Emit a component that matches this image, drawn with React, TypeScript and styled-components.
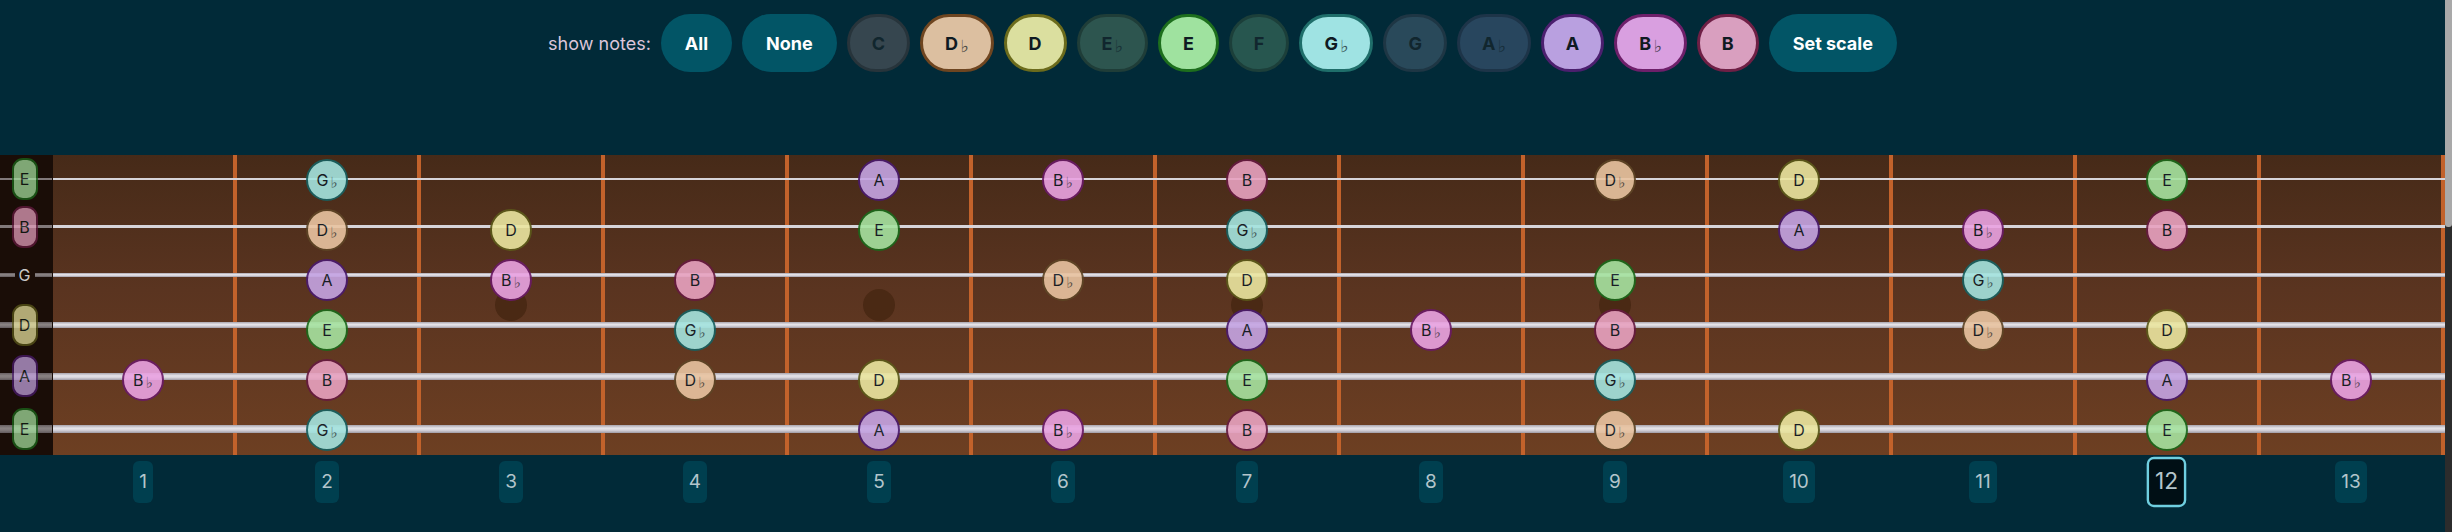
import React from 'react';
import styled, { createGlobalStyle, css } from 'styled-components';

const GlobalStyle = createGlobalStyle`
  html, body { margin: 0; padding: 0; background: #012a38; overflow: hidden; }
  body { font-family: Inter, "Noto Sans", "DejaVu Sans", sans-serif; }
  * { box-sizing: border-box; }
`;

type Palette = {
  fill: string;
  border: string;
  board: string;
  boardBorder: string;
  dim: string;
  dimBorder: string;
};

const NOTES = ['C', 'D♭', 'D', 'E♭', 'E', 'F', 'G♭', 'G', 'A♭', 'A', 'B♭', 'B'];

const PALETTE: Record<string, Palette> = {
  C: { fill: '#d0d0d0', border: '#555', board: '#d8d8d8', boardBorder: '#555', dim: '#36464f', dimBorder: '#27343b' },
  'D♭': { fill: '#dcbfa0', border: '#6e4520', board: '#e9c4a1', boardBorder: '#5e4526', dim: '#4a3a30', dimBorder: '#3a2c22' },
  D: { fill: '#dbdf9f', border: '#6b6b1c', board: '#ebe6a0', boardBorder: '#5c5a1a', dim: '#4a4c34', dimBorder: '#3a3c26' },
  'E♭': { fill: '#8fcfbf', border: '#1f5a50', board: '#8fcfbf', boardBorder: '#1f5a50', dim: '#2d554f', dimBorder: '#1f3d38' },
  E: { fill: '#9fe29f', border: '#1d6e1d', board: '#a6e3a0', boardBorder: '#1b6a1b', dim: '#2f5a3c', dimBorder: '#1f4028' },
  F: { fill: '#8fd7c4', border: '#1c5a50', board: '#8fd7c4', boardBorder: '#1c5a50', dim: '#27564f', dimBorder: '#1c3f3a' },
  'G♭': { fill: '#9fe3e3', border: '#1f6e6a', board: '#a4e4df', boardBorder: '#176161', dim: '#2c5a5e', dimBorder: '#1e4044' },
  G: { fill: '#9fc8e0', border: '#1e4a66', board: '#9fc8e0', boardBorder: '#1e4a66', dim: '#29495a', dimBorder: '#1e3644' },
  'A♭': { fill: '#9fb4e4', border: '#1e3a70', board: '#9fb4e4', boardBorder: '#1e3a70', dim: '#28465e', dimBorder: '#1d3448' },
  A: { fill: '#b9a0e0', border: '#4b1f6e', board: '#c5a4e3', boardBorder: '#4a1a6e', dim: '#3c3658', dimBorder: '#2c2642' },
  'B♭': { fill: '#d99fe0', border: '#6e1f6a', board: '#eaa3e2', boardBorder: '#6a1a66', dim: '#48345a', dimBorder: '#362644' },
  B: { fill: '#d99fbf', border: '#6e1f45', board: '#e8a2c0', boardBorder: '#661a40', dim: '#48344a', dimBorder: '#362636' },
};

const SELECTED = new Set(['D♭', 'D', 'E', 'G♭', 'A', 'B♭', 'B']);

type GuitarString = { open: number; center: number; thick: number };

// open note index, string center within its 50px row, string thickness
const STRINGS: GuitarString[] = [
  { open: 4, center: 24, thick: 2 },
  { open: 11, center: 21.7, thick: 3 },
  { open: 7, center: 20.2, thick: 4 },
  { open: 2, center: 19.8, thick: 6 },
  { open: 9, center: 21.3, thick: 7 },
  { open: 4, center: 23.8, thick: 8 },
];

const FRETS = Array.from({ length: 13 }, (_, i) => i + 1);
const INLAYS = new Set([3, 5, 7, 9]);
const ACTIVE_FRET = 12;
const NUT_W = 53;

const stringBg = (thick: number) =>
  thick <= 3
    ? '#d7d4d9'
    : 'linear-gradient(to bottom, #a8a4ad 0%, #e6e4e9 40%, #d6d3da 65%, #9f9ba5 100%)';

/* ---------- page frame ---------- */

const Page = styled.div`
  display: flex;
  width: 100vw;
  height: 100vh;
  overflow: hidden;
`;

const Main = styled.main`
  flex: 1;
  min-width: 0;
  display: flex;
  flex-direction: column;
`;

const ScrollRail = styled.div`
  width: 7px;
  flex: none;
  background: #2c2c2c;
`;

const ScrollThumb = styled.div`
  height: 227px;
  background: #a9a9a9;
  border-radius: 0 0 3px 3px;
`;

/* ---------- toolbar ---------- */

const Toolbar = styled.div`
  display: flex;
  align-items: center;
  justify-content: center;
  gap: 10px;
  padding-top: 14px;
  height: 72px;
  margin-bottom: 83px;
`;

const ToolbarLabel = styled.span`
  color: #dcc5da;
  font-size: 18px;
`;

const pillBase = css`
  height: 58px;
  border-radius: 29px;
  font-family: Inter, "Noto Sans", "DejaVu Sans", sans-serif;
  font-size: 18px;
  font-weight: 700;
  display: inline-flex;
  align-items: center;
  justify-content: center;
  cursor: pointer;
`;

const ActionButton = styled.button`
  ${pillBase};
  padding: 0 24px;
  border: none;
  background: #025566;
  color: #ffffff;
`;

const NoteToggle = styled.button<{ $p: Palette; $on: boolean }>`
  ${pillBase};
  padding: 0 22px;
  border: 3px solid ${(p) => (p.$on ? p.$p.border : p.$p.dimBorder)};
  background: ${(p) => (p.$on ? p.$p.fill : p.$p.dim)};
  color: ${(p) => (p.$on ? '#0f1a22' : '#11262e')};
`;

const Flat = styled.span`
  font-family: "DejaVu Sans", sans-serif;
  font-size: 0.95em;
  font-weight: 400;
  margin-left: 0.14em;
  position: relative;
  top: 0.2em;
  opacity: 0.72;
`;

const NoteText = ({ name }: { name: string }) => (
  <>
    {name[0]}
    {name.length > 1 && <Flat>♭</Flat>}
  </>
);

/* ---------- fretboard ---------- */

const Board = styled.div`
  display: flex;
  flex-direction: column;
  background: linear-gradient(to bottom, #462a18 0%, #5a3420 45%, #6d3f22 100%);
`;

const StringRow = styled.div<{ $center: number; $thick: number }>`
  position: relative;
  display: grid;
  grid-template-columns: ${NUT_W}px repeat(13, 1fr);
  height: 50px;
  &::after {
    content: '';
    position: absolute;
    left: ${NUT_W}px;
    right: 0;
    top: ${(p) => p.$center - p.$thick / 2}px;
    height: ${(p) => p.$thick}px;
    background: ${(p) => stringBg(p.$thick)};
    z-index: 1;
    pointer-events: none;
  }
`;

const NutCell = styled.div<{ $center: number; $thick: number }>`
  position: relative;
  background: #1a0d07;
  display: flex;
  justify-content: center;
  padding-right: 4px;
  &::before {
    content: '';
    position: absolute;
    left: 0;
    right: 1px;
    top: ${(p) => p.$center - p.$thick / 2}px;
    height: ${(p) => p.$thick}px;
    background: ${(p) => stringBg(p.$thick)};
    opacity: 0.55;
  }
`;

const OpenLabel = styled.div<{ $p: Palette; $on: boolean; $center: number }>`
  position: relative;
  z-index: 1;
  align-self: flex-start;
  margin-top: ${(p) => p.$center - 21}px;
  height: 42px;
  display: flex;
  align-items: center;
  justify-content: center;
  font-size: 16px;
  ${(p) =>
    p.$on
      ? css`
          width: 26px;
          border-radius: 11px;
          border: 2.5px solid ${p.$p.boardBorder};
          background: ${p.$p.board};
          color: #0e1a14;
          opacity: 0.72;
        `
      : css`
          width: 20px;
          color: #c9c6c6;
          background: linear-gradient(to bottom, transparent 35%, #1a0d07 35%, #1a0d07 65%, transparent 65%);
        `}
`;

const FretCell = styled.div`
  position: relative;
  border-right: 4px solid #c2622b;
  display: flex;
  align-items: center;
  justify-content: center;
`;

const NoteDot = styled.div<{ $p: Palette }>`
  position: relative;
  z-index: 2;
  width: 42px;
  height: 42px;
  border-radius: 50%;
  border: 2.5px solid ${(p) => p.$p.boardBorder};
  background: ${(p) => p.$p.board};
  opacity: 0.9;
  color: #111a24;
  font-size: 16px;
  display: flex;
  align-items: center;
  justify-content: center;
`;

const Inlay = styled.div`
  position: absolute;
  left: 50%;
  bottom: -16px;
  width: 32px;
  height: 32px;
  margin-left: -16px;
  border-radius: 50%;
  background: #4a2914;
`;

/* ---------- fret numbers ---------- */

const FretNumbers = styled.div`
  display: grid;
  grid-template-columns: ${NUT_W}px repeat(13, 1fr);
  margin-top: 6px;
`;

const FretNumCell = styled.div`
  display: flex;
  justify-content: center;
  padding-right: 4px;
`;

const FretTag = styled.div<{ $active: boolean }>`
  height: 42px;
  line-height: 42px;
  border-radius: 6px;
  font-size: 19px;
  color: #b3c5cb;
  ${(p) =>
    p.$active
      ? css`
          padding: 0 5px;
          line-height: 38px;
          background: #000f15;
          border: 2px solid #6fcfe0;
          transform: scale(1.2);
        `
      : css`
          padding: 0 6px;
          background: #003f4f;
        `}
`;

export default function App() {
  return (
    <Page>
      <GlobalStyle />
      <Main>
        <Toolbar>
          <ToolbarLabel>show notes:</ToolbarLabel>
          <ActionButton>All</ActionButton>
          <ActionButton>None</ActionButton>
          {NOTES.map((n) => (
            <NoteToggle key={n} $p={PALETTE[n]} $on={SELECTED.has(n)}>
              <NoteText name={n} />
            </NoteToggle>
          ))}
          <ActionButton>Set scale</ActionButton>
        </Toolbar>

        <Board>
          {STRINGS.map((s, si) => {
            const openName = NOTES[s.open];
            return (
              <StringRow key={si} $center={s.center} $thick={s.thick}>
                <NutCell $center={s.center} $thick={s.thick}>
                  <OpenLabel $p={PALETTE[openName]} $on={SELECTED.has(openName)} $center={s.center}>
                    {openName}
                  </OpenLabel>
                </NutCell>
                {FRETS.map((f) => {
                  const name = NOTES[(s.open + f) % 12];
                  return (
                    <FretCell key={f}>
                      {si === 2 && INLAYS.has(f) && <Inlay />}
                      {SELECTED.has(name) && (
                        <NoteDot $p={PALETTE[name]}>
                          <NoteText name={name} />
                        </NoteDot>
                      )}
                    </FretCell>
                  );
                })}
              </StringRow>
            );
          })}
        </Board>

        <FretNumbers>
          <div />
          {FRETS.map((f) => (
            <FretNumCell key={f}>
              <FretTag $active={f === ACTIVE_FRET}>{f}</FretTag>
            </FretNumCell>
          ))}
        </FretNumbers>
      </Main>
      <ScrollRail>
        <ScrollThumb />
      </ScrollRail>
    </Page>
  );
}
